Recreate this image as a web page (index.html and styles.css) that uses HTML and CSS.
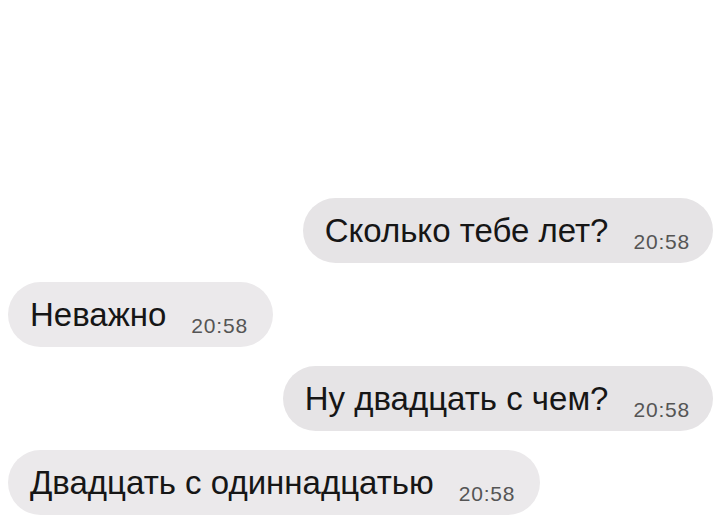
FILE: index.html
```html
<!DOCTYPE html>
<html lang="ru">
<head>
    <meta charset="UTF-8">
    <meta name="viewport" content="width=device-width, initial-scale=1.0">
    <title>Чат</title>
    <link rel="stylesheet" href="styles.css">
</head>
<body>
    <div class="chat">
        <div class="message out">
            <span class="text">Сколько тебе лет?</span>
            <span class="time">20:58</span>
        </div>
        <div class="message in">
            <span class="text">Неважно</span>
            <span class="time">20:58</span>
        </div>
        <div class="message out">
            <span class="text">Ну двадцать с чем?</span>
            <span class="time">20:58</span>
        </div>
        <div class="message in">
            <span class="text">Двадцать с одиннадцатью</span>
            <span class="time">20:58</span>
        </div>
    </div>
</body>
</html>
```

FILE: styles.css
```css
body {
    font-family: "Liberation Sans", Arial, sans-serif;
    margin: 0;
    padding: 0;
    background-color: #fff;
}
.chat {
    height: 532px;
    box-sizing: border-box;
    display: flex;
    flex-direction: column;
    justify-content: flex-end;
    gap: 19px;
    padding: 0 7px 17px 8px;
}
.message {
    display: flex;
    align-items: baseline;
    gap: 25px;
    height: 65px;
    box-sizing: border-box;
    padding: 0 23px 0 22px;
    border-radius: 33px;
    background-color: #e6e4e6;
}
.message.out {
    align-self: flex-end;
}
.message.in {
    align-self: flex-start;
    padding-right: 25px;
    background-color: #ebe9eb;
}
.text {
    font-size: 33px;
    line-height: 65px;
    color: #161616;
}
.time {
    font-size: 21px;
    letter-spacing: 0.8px;
    color: #555;
    position: relative;
    top: 7px;
}
```
